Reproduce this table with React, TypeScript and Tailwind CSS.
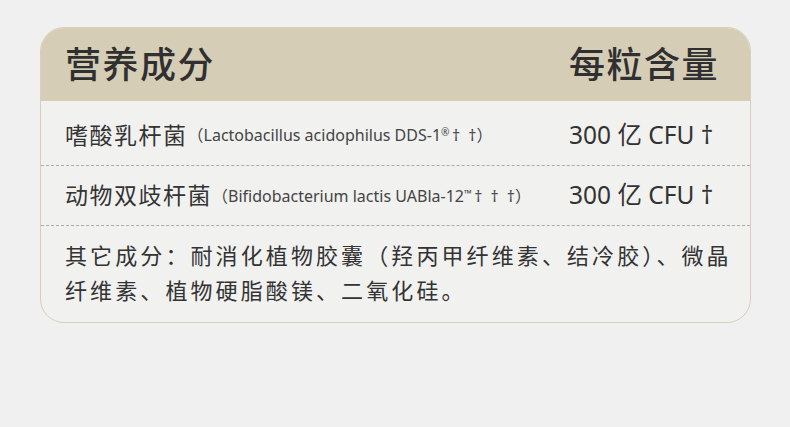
const font = { fontFamily: '"Noto Sans", "Noto Sans CJK SC", sans-serif' }

interface Strain {
  name: string
  latin: string
  mark: string
  daggers: string
  amount: string
}

const strains: Strain[] = [
  {
    name: "嗜酸乳杆菌",
    latin: "Lactobacillus acidophilus DDS-1",
    mark: "®",
    daggers: "\u2009†\u2002†",
    amount: "300 亿 CFU †",
  },
  {
    name: "动物双歧杆菌",
    latin: "Bifidobacterium lactis UABla-12",
    mark: "™",
    daggers: "\u2009†\u2002†\u2002†",
    amount: "300 亿 CFU †",
  },
]

export default function App() {
  return (
    <div className="w-[790px] h-[427px] bg-[#eff0ef] pt-[27px] pl-[40px]" style={font}>
      <div className="w-[711px] h-[296px] rounded-[24px] border-[1.5px] border-[#d8cfb9] overflow-hidden bg-[#f1f1f0]">
        {/* header */}
        <div className="h-[73px] bg-[#d6cdb7] grid grid-cols-[1fr_150px] items-center pl-[24px] pr-[31px] text-[#303030] text-[36px] font-medium tracking-[1.5px] leading-none">
          <div>营养成分</div>
          <div>每粒含量</div>
        </div>

        {strains.map((s, i) => (
          <div
            key={s.name}
            className={
              "grid grid-cols-[1fr_150px] items-center pl-[24px] pr-[31px] border-b border-dashed border-[#aaa] text-[#333] " +
              (i === 0 ? "h-[65px] pt-[4px]" : "h-[60px]")
            }
          >
            <div className="flex items-center whitespace-pre">
              <span className="text-[23px] tracking-[1.5px]">{s.name}</span>
              <span className="text-[16px] text-[#444]">
                （{s.latin}
                <sup className="text-[10px]">{s.mark}</sup>
                {s.daggers}）
              </span>
            </div>
            <div className="text-[24.5px] whitespace-nowrap">{s.amount}</div>
          </div>
        ))}

        <p className="pl-[24px] pr-[6px] pt-[12px] text-[22px] leading-[35px] tracking-[3.1px] text-[#333]">
          其它成分：耐消化植物胶囊（羟丙甲纤维素、结冷胶）、微晶纤维素、植物硬脂酸镁、二氧化硅。
        </p>
      </div>
    </div>
  )
}
